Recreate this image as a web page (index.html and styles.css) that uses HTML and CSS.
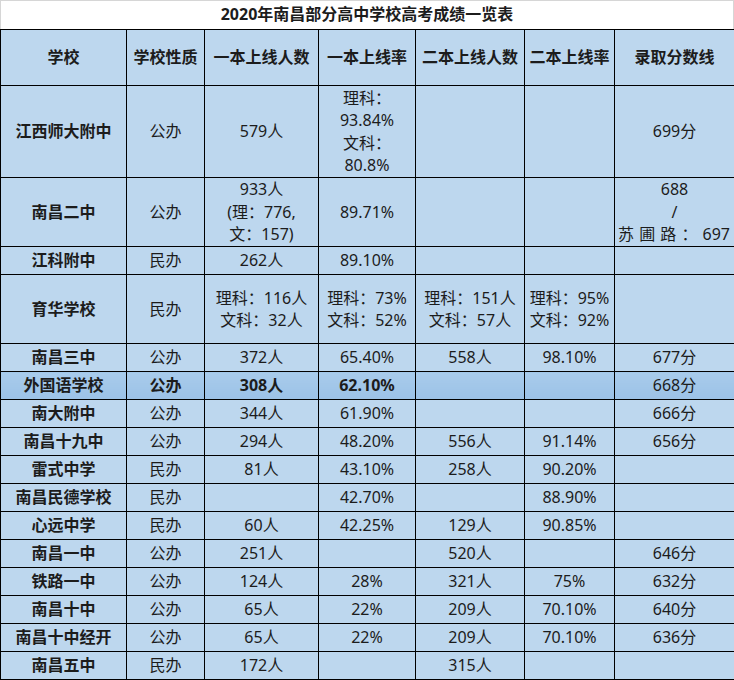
FILE: index.html
```html
<!DOCTYPE html>
<html lang="zh">
<head>
<meta charset="utf-8">
<title>2020年南昌部分高中学校高考成绩一览表</title>
<link rel="stylesheet" href="styles.css">
</head>
<body>
<div class="sheet">
  <div class="title">2020年南昌部分高中学校高考成绩一览表</div>
  <table class="grid">
    <colgroup>
      <col class="c1"><col class="c2"><col class="c3"><col class="c4"><col class="c5"><col class="c6"><col class="c7">
    </colgroup>
    <thead>
      <tr class="head">
        <th>学校</th><th>学校性质</th><th>一本上线人数</th><th>一本上线率</th><th>二本上线人数</th><th>二本上线率</th><th>录取分数线</th>
      </tr>
    </thead>
    <tbody>
      <tr class="h92">
        <td class="name">江西师大附中</td><td>公办</td><td>579人</td><td>理科：<br>93.84%<br>文科：<br>80.8%</td><td></td><td></td><td>699分</td>
      </tr>
      <tr class="h69">
        <td class="name">南昌二中</td><td>公办</td><td>933人<br>(理：776,<br>文：157)</td><td>89.71%</td><td></td><td></td>
        <td><div>688</div><div>/</div><div class="spread"><span>苏</span><span>圃</span><span>路</span><span>：</span><span>697</span></div></td>
      </tr>
      <tr><td class="name">江科附中</td><td>民办</td><td>262人</td><td>89.10%</td><td></td><td></td><td></td></tr>
      <tr class="h69">
        <td class="name">育华学校</td><td>民办</td><td>理科：116人<br>文科：32人</td><td>理科：73%<br>文科：52%</td><td>理科：151人<br>文科：57人</td><td>理科：95%<br>文科：92%</td><td></td>
      </tr>
      <tr><td class="name">南昌三中</td><td>公办</td><td>372人</td><td>65.40%</td><td>558人</td><td>98.10%</td><td>677分</td></tr>
      <tr class="hl"><td class="name">外国语学校</td><td>公办</td><td>308人</td><td>62.10%</td><td></td><td></td><td class="normal">668分</td></tr>
      <tr><td class="name">南大附中</td><td>公办</td><td>344人</td><td>61.90%</td><td></td><td></td><td>666分</td></tr>
      <tr><td class="name">南昌十九中</td><td>公办</td><td>294人</td><td>48.20%</td><td>556人</td><td>91.14%</td><td>656分</td></tr>
      <tr><td class="name">雷式中学</td><td>民办</td><td>81人</td><td>43.10%</td><td>258人</td><td>90.20%</td><td></td></tr>
      <tr><td class="name">南昌民德学校</td><td>民办</td><td></td><td>42.70%</td><td></td><td>88.90%</td><td></td></tr>
      <tr><td class="name">心远中学</td><td>民办</td><td>60人</td><td>42.25%</td><td>129人</td><td>90.85%</td><td></td></tr>
      <tr><td class="name">南昌一中</td><td>公办</td><td>251人</td><td></td><td>520人</td><td></td><td>646分</td></tr>
      <tr><td class="name">铁路一中</td><td>公办</td><td>124人</td><td>28%</td><td>321人</td><td>75%</td><td>632分</td></tr>
      <tr><td class="name">南昌十中</td><td>公办</td><td>65人</td><td>22%</td><td>209人</td><td>70.10%</td><td>640分</td></tr>
      <tr><td class="name">南昌十中经开</td><td>公办</td><td>65人</td><td>22%</td><td>209人</td><td>70.10%</td><td>636分</td></tr>
      <tr><td class="name">南昌五中</td><td>民办</td><td>172人</td><td></td><td>315人</td><td></td><td></td></tr>
    </tbody>
  </table>
</div>
</body>
</html>
```
FILE: styles.css
```css
html, body {
  margin: 0;
  padding: 0;
  background: #ffffff;
}

.sheet {
  width: 734px;
  font-family: "Noto Sans", "Noto Sans CJK SC", sans-serif;
  font-size: 16px;
  color: #1c1c1c;
}

.title {
  box-sizing: border-box;
  height: 29px;
  border: 1px solid #d6d6d6;
  border-bottom: none;
  text-align: center;
  font-weight: bold;
  line-height: 27px;
  background: #ffffff;
}

.grid {
  width: 734px;
  table-layout: fixed;
  border-collapse: collapse;
  background: #bdd7ee;
}

.c1 { width: 126px; }
.c2 { width: 78px; }
.c3 { width: 114px; }
.c4 { width: 97px; }
.c5 { width: 109px; }
.c6 { width: 90px; }
.c7 { width: 120px; }

.grid th,
.grid td {
  border: 1px solid #000;
  padding: 0;
  text-align: center;
  vertical-align: middle;
  line-height: 22.5px;
  font-weight: normal;
  white-space: nowrap;
}

.grid tr { height: 28px; }
.grid tr.head { height: 56px; }
.grid tr.h92 { height: 92px; }
.grid tr.h69 { height: 69px; }

.grid th { font-weight: bold; }
.grid td.name { font-weight: bold; }

.grid tr.hl td {
  background: linear-gradient(#a8cbeb, #9cc2e7);
  font-weight: bold;
}
.grid tr.hl td.normal { font-weight: normal; }

.spread {
  display: flex;
  justify-content: space-between;
  padding: 0 4px 0 3px;
}
```
